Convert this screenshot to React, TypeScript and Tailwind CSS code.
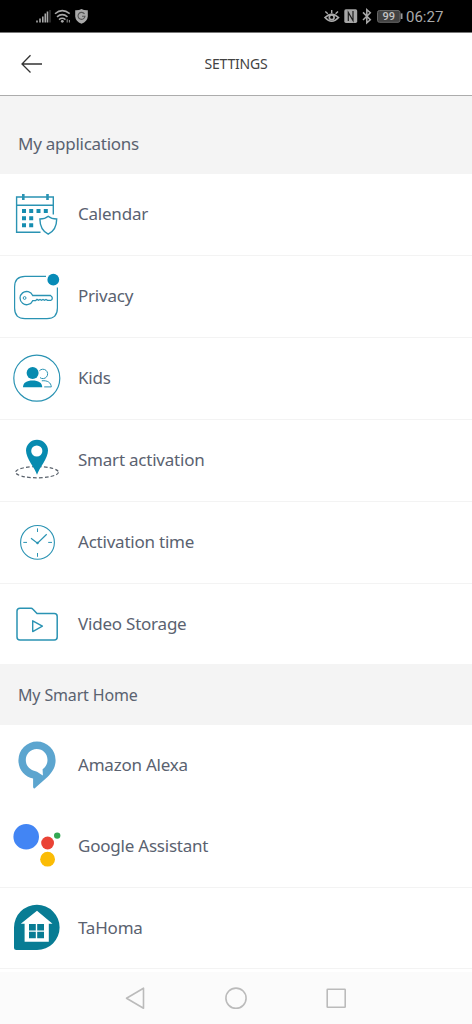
import type { ReactNode } from "react";

const TEAL = "#2a93b3";

function Glyph({ top, height, children }: { top: number; height: number; children: ReactNode }) {
  return (
    <svg width="78" height={height} viewBox={`0 ${top} 78 ${height}`} fill="none" className="block shrink-0">
      {children}
    </svg>
  );
}

type Item = { label: string; top: number; height: number; row: string; icon: ReactNode };

const applications: Item[] = [
  {
    label: "Calendar",
    top: 174,
    height: 82,
    row: "h-[82px] border-b",
    icon: (
      <g>
        <path d="M53.3 214.5V197H16.6V232.3H40.5M16.6 205.2H53.3" stroke={TEAL} strokeWidth="1.4" />
        <path d="M23.3 194V200M47.5 194V200" stroke={TEAL} strokeWidth="2.6" />
        <path
          d="M22 209h4v4h-4zM29.2 209h4v4h-4zM36.5 209h4v4h-4zM43.8 209h4v4h-4zM22 216.2h4v4h-4zM29.2 216.2h4v4h-4zM22 223.2h4v4h-4zM29.2 223.2h4v4h-4z"
          fill="#168db0"
        />
        <path
          d="M48.2 216.3C46 218.2 43 219 39.9 219C39.9 226 42 231 48.2 234.2C54.5 231 56.7 226 56.7 219C53.5 219 50.5 218.2 48.2 216.3Z"
          stroke={TEAL}
          strokeWidth="1.4"
        />
      </g>
    ),
  },
  {
    label: "Privacy",
    top: 256,
    height: 82,
    row: "h-[82px] border-b",
    icon: (
      <g>
        <path
          d="M46 276.3H25Q14.6 276.3 14.6 287V308Q14.6 318.6 25 318.6H47Q57.4 318.6 57.4 308V287.5"
          stroke={TEAL}
          strokeWidth="1.2"
        />
        <circle cx="53.3" cy="279.7" r="5.9" fill="#078bb7" />
        <path
          d="M32.7 295.5H50.5Q52.3 296.6 52.3 298Q52.3 300.2 50.8 300.3H47.5L46 299.4L44.5 300.3L43 299.4L41.5 300.3L40 299.4L38.5 300.3L37 299.4L35.5 300.7H32.7A6.6 6.6 0 1 1 32.7 295.5Z"
          stroke={TEAL}
          strokeWidth="1.3"
        />
        <circle cx="24.6" cy="298" r="1.4" stroke={TEAL} strokeWidth="1" />
      </g>
    ),
  },
  {
    label: "Kids",
    top: 338,
    height: 82,
    row: "h-[82px] border-b",
    icon: (
      <g>
        <circle cx="36.8" cy="378.2" r="23" stroke={TEAL} strokeWidth="1.2" />
        <circle cx="32.6" cy="373" r="6" fill="#078bb0" />
        <path d="M23 387.2C23 382.5 26.8 380.4 32.6 380.4C38.4 380.4 42.2 382.5 42.2 387.2Z" fill="#078bb0" />
        <path
          d="M39.4 370.8A4.7 4.7 0 1 1 40 377.6M41.8 380.8C47.6 380.2 51 382.6 51.3 386.9H44.2"
          stroke={TEAL}
          strokeWidth="1"
        />
      </g>
    ),
  },
  {
    label: "Smart activation",
    top: 420,
    height: 82,
    row: "h-[82px] border-b",
    icon: (
      <g>
        <ellipse cx="37" cy="472.2" rx="21.4" ry="5.6" stroke="#59616b" strokeWidth="1.2" strokeDasharray="3.6 2.2" />
        <path
          d="M37 474.8C35 468.5 26 458.5 26 450.6A11 10.8 0 0 1 48 450.6C48 458.5 39 468.5 37 474.8Z"
          fill="#078bb0"
        />
        <circle cx="36.8" cy="451" r="5.6" fill="#fff" />
      </g>
    ),
  },
  {
    label: "Activation time",
    top: 502,
    height: 82,
    row: "h-[82px] border-b",
    icon: (
      <g stroke={TEAL}>
        <circle cx="37.5" cy="542.4" r="16.9" strokeWidth="1.1" />
        <path d="M37.5 528.4V532M37.5 553V556.8M23.3 542.4H27M48.2 542.4H52" strokeWidth="1" />
        <path d="M31 538.3L37.5 543.2L46.7 534.3" strokeWidth="1.2" />
        <circle cx="37.5" cy="543" r="1" fill={TEAL} strokeWidth="0.5" />
      </g>
    ),
  },
  {
    label: "Video Storage",
    top: 584,
    height: 80,
    row: "h-20",
    icon: (
      <g stroke={TEAL} strokeLinejoin="round">
        <path
          d="M20 608.2H31.2Q32 608.2 32.7 609L37 613.6H54.3Q57.2 613.6 57.2 616.5V637Q57.2 640 54.3 640H20Q17 640 17 637V611Q17 608.2 20 608.2Z"
          strokeWidth="1.5"
        />
        <path d="M32.7 620.8V631.6L42.4 626.2Z" strokeWidth="1.4" />
      </g>
    ),
  },
];

const smartHome: Item[] = [
  {
    label: "Amazon Alexa",
    top: 725,
    height: 81,
    row: "h-[81px]",
    icon: (
      <path
        fill="#5ca5cf"
        fillRule="evenodd"
        d="M37 741.6A18.6 18.6 0 0 1 55.6 760.2C55.6 767.5 52 772.5 47.5 777L34.5 788.5Q33 788.8 33.1 786.5V778.5C24.4 776.8 18.4 769.5 18.4 760.2A18.6 18.6 0 0 1 37 741.6ZM36.7 749C30.4 749 25.8 754 25.8 760C25.8 765.6 29.6 769.8 34.8 770.9C38 771.5 40 773.8 42.9 775.6L42.6 769.2C45.8 767 47.5 763.8 47.5 760C47.5 753.7 43 749 36.7 749Z"
      />
    ),
  },
  {
    label: "Google Assistant",
    top: 806,
    height: 82,
    row: "h-[82px] border-b",
    icon: (
      <g>
        <circle cx="26.2" cy="836.7" r="12.8" fill="#4285f4" />
        <circle cx="47.6" cy="843" r="6.4" fill="#ea4335" />
        <circle cx="57.2" cy="835.6" r="3.2" fill="#34a853" />
        <circle cx="47.6" cy="859.2" r="7.4" fill="#fbbc05" />
      </g>
    ),
  },
  {
    label: "TaHoma",
    top: 888,
    height: 81,
    row: "h-[81px] border-b",
    icon: (
      <g>
        <path d="M37 904.8A22.6 22.6 0 0 1 37 950H16.5Q14 950 14 947.5V927.5A22.8 22.8 0 0 1 37 904.8Z" fill="#087c94" />
        <path d="M37 910.7L52.5 923.8H48.8V941.8H24.6V923.8H20.8Z" fill="#fff" />
        <path d="M29 924h6.8v6.5h-6.8zM37.2 924h6.8v6.5h-6.8zM29 931.8h6.8v6.5h-6.8zM37.2 931.8h6.8v6.5h-6.8z" fill="#087c94" />
      </g>
    ),
  },
];

function List({ items }: { items: Item[] }) {
  return (
    <ul className="bg-white">
      {items.map((item) => (
        <li key={item.label} className={`flex items-start overflow-hidden border-[#f3f3f3] ${item.row}`}>
          <Glyph top={item.top} height={item.height}>
            {item.icon}
          </Glyph>
          <span className="pt-7 text-[17px] leading-6 tracking-[-0.22px]">{item.label}</span>
        </li>
      ))}
    </ul>
  );
}

function StatusBar() {
  return (
    <div className="flex h-[33px] justify-between border-b border-[#777] bg-black">
      <svg width="100" height="32" viewBox="0 0 100 32" fill="none">
        <path d="M37 22.5V20.5M40 22.5V18.5M42.8 22.5V16.5M45.3 22.5V13.5M47.5 22.5V11.5" stroke="#a8a8a8" strokeWidth="1.6" />
        <path d="M50 22.5V10" stroke="#3b3b3b" strokeWidth="1.4" />
        <path d="M55 13.7Q62.2 7.6 69.7 13.7M57 16.9Q62.2 12.4 67.5 16.9M59 19.6Q62.2 17 65.5 19.6" stroke="#a8a8a8" strokeWidth="1.5" />
        <circle cx="62.3" cy="21.3" r="1.4" fill="#a8a8a8" />
        <path d="M67.2 19.3V22.5M69.4 20V22.5" stroke="#888" strokeWidth="1.1" />
        <path d="M81.5 9Q84 10.5 87.8 10.3V16.5Q87.4 21.3 81.5 23.8Q75.6 21.3 75.2 16.5V10.3Q79 10.5 81.5 9Z" fill="#aaa" />
        <path d="M84.5 14A3.5 3.5 0 1 0 85 16.2H82" stroke="#555" strokeWidth="1.1" />
      </svg>
      <div className="flex items-center">
        <svg width="106" height="32" viewBox="300 0 106 32" fill="none">
          <path d="M325 17.5Q331.7 11 338.5 17.5Q331.7 25 325 17.5Z" stroke="#aaa" strokeWidth="1.7" />
          <circle cx="331.7" cy="17.3" r="2.4" stroke="#aaa" strokeWidth="1.7" />
          <path d="M331.7 13V10M327.8 13.8L325.3 11.5M335.6 13.8L338 11.5" stroke="#aaa" strokeWidth="1.4" />
          <rect x="344.3" y="9.3" width="12.9" height="13.6" rx="1.6" fill="#a6a6a6" />
          <path d="M348.3 21V12.5L353 20.5V11" stroke="#1c1c1c" strokeWidth="1.2" />
          <path d="M363 12.4L370.3 19.7L366.8 22.8V9.6L370.3 12.7L363 20" stroke="#aaa" strokeWidth="1.5" />
          <rect x="377.5" y="10.5" width="22.5" height="11.8" rx="2" fill="#414141" stroke="#666" />
          <path d="M401.6 13.4V19" stroke="#999" strokeWidth="1.8" />
          <text x="388.8" y="20.4" textAnchor="middle" fill="#c4c4c4" fontSize="11" fontWeight="500" fontFamily="Roboto, sans-serif">
            99
          </text>
        </svg>
        <span className="w-[66px] pt-0.5 font-[Roboto,sans-serif] text-[15px] leading-4 text-[#aaa]">06:27</span>
      </div>
    </div>
  );
}

export default function App() {
  return (
    <div className="flex h-[1024px] w-[472px] flex-col overflow-hidden bg-white font-['Noto_Sans',sans-serif] text-[#5a6270]">
      <StatusBar />
      <header className="grid h-[63px] grid-cols-[78px_1fr_78px] items-center border-b border-[#acacac]">
        <svg width="78" height="62" viewBox="0 33 78 62" fill="none" stroke="#333" strokeWidth="1.3">
          <path d="M42 64H22M30.5 55.3L22 64L30.5 72.5" />
        </svg>
        <h1 className="pb-px text-center text-sm tracking-[-0.2px] text-[#424242]">SETTINGS</h1>
      </header>
      <main>
        <h2 className="h-[78px] bg-[#f4f4f4] pt-9 pl-[18px] text-[17px] leading-6 tracking-[-0.26px]">My applications</h2>
        <List items={applications} />
        <h2 className="h-[61px] bg-[#f4f4f4] pt-[19px] pl-[18px] text-base leading-6 tracking-[-0.15px]">My Smart Home</h2>
        <List items={smartHome} />
      </main>
      <nav className="mt-[3px] flex-1 bg-[#fbfbfb]">
        <svg width="472" height="52" viewBox="0 972 472 52" fill="none" stroke="#bbb" strokeWidth="1.6" strokeLinejoin="round">
          <path d="M143.5 988.2V1008.2L126.5 998.2Z" />
          <circle cx="236" cy="998.2" r="10.1" />
          <rect x="327.2" y="989.2" width="18" height="18" rx="0.5" />
        </svg>
      </nav>
    </div>
  );
}
